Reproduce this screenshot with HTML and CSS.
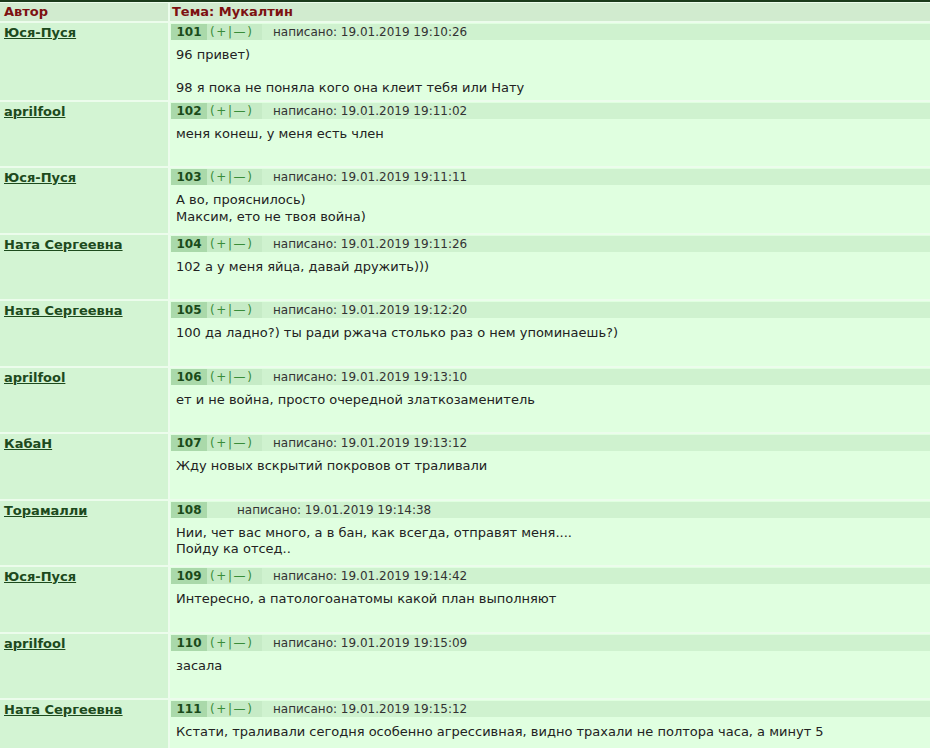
FILE: index.html
```html
<!DOCTYPE html>
<html lang="ru">
<head>
  <meta charset="UTF-8">
  <title>Мукалтин</title>
  <link rel="stylesheet" href="styles.css">
</head>
<body>
  <div class="topic">
    <div class="row head">
      <div class="cell">Автор</div>
      <div class="cell">Тема: Мукалтин</div>
    </div>

    <div class="row post">
      <div class="author"><a href="#">Юся-Пуся</a></div>
      <div class="msg">
        <div class="meta"><span class="num">101</span><span class="pm">(+|—)</span><span class="date">написано: 19.01.2019 19:10:26</span></div>
        <div class="text">96 привет)<br><br>98 я пока не поняла кого она клеит тебя или Нату</div>
      </div>
    </div>

    <div class="row post">
      <div class="author"><a href="#">aprilfool</a></div>
      <div class="msg">
        <div class="meta"><span class="num">102</span><span class="pm">(+|—)</span><span class="date">написано: 19.01.2019 19:11:02</span></div>
        <div class="text">меня конеш, у меня есть член</div>
      </div>
    </div>

    <div class="row post">
      <div class="author"><a href="#">Юся-Пуся</a></div>
      <div class="msg">
        <div class="meta"><span class="num">103</span><span class="pm">(+|—)</span><span class="date">написано: 19.01.2019 19:11:11</span></div>
        <div class="text">А во, прояснилось)<br>Максим, ето не твоя война)</div>
      </div>
    </div>

    <div class="row post">
      <div class="author"><a href="#">Ната Сергеевна</a></div>
      <div class="msg">
        <div class="meta"><span class="num">104</span><span class="pm">(+|—)</span><span class="date">написано: 19.01.2019 19:11:26</span></div>
        <div class="text">102 а у меня яйца, давай дружить)))</div>
      </div>
    </div>

    <div class="row post">
      <div class="author"><a href="#">Ната Сергеевна</a></div>
      <div class="msg">
        <div class="meta"><span class="num">105</span><span class="pm">(+|—)</span><span class="date">написано: 19.01.2019 19:12:20</span></div>
        <div class="text">100 да ладно?) ты ради ржача столько раз о нем упоминаешь?)</div>
      </div>
    </div>

    <div class="row post">
      <div class="author"><a href="#">aprilfool</a></div>
      <div class="msg">
        <div class="meta"><span class="num">106</span><span class="pm">(+|—)</span><span class="date">написано: 19.01.2019 19:13:10</span></div>
        <div class="text">ет и не война, просто очередной златкозаменитель</div>
      </div>
    </div>

    <div class="row post">
      <div class="author"><a href="#">КабаН</a></div>
      <div class="msg">
        <div class="meta"><span class="num">107</span><span class="pm">(+|—)</span><span class="date">написано: 19.01.2019 19:13:12</span></div>
        <div class="text">Жду новых вскрытий покровов от траливали</div>
      </div>
    </div>

    <div class="row post">
      <div class="author"><a href="#">Торамалли</a></div>
      <div class="msg">
        <div class="meta"><span class="num">108</span><span class="pm-empty"></span><span class="date">написано: 19.01.2019 19:14:38</span></div>
        <div class="text">Нии, чет вас много, а в бан, как всегда, отправят меня....<br>Пойду ка отсед..</div>
      </div>
    </div>

    <div class="row post">
      <div class="author"><a href="#">Юся-Пуся</a></div>
      <div class="msg">
        <div class="meta"><span class="num">109</span><span class="pm">(+|—)</span><span class="date">написано: 19.01.2019 19:14:42</span></div>
        <div class="text">Интересно, а патологоанатомы какой план выполняют</div>
      </div>
    </div>

    <div class="row post">
      <div class="author"><a href="#">aprilfool</a></div>
      <div class="msg">
        <div class="meta"><span class="num">110</span><span class="pm">(+|—)</span><span class="date">написано: 19.01.2019 19:15:09</span></div>
        <div class="text">засала</div>
      </div>
    </div>

    <div class="row post">
      <div class="author"><a href="#">Ната Сергеевна</a></div>
      <div class="msg">
        <div class="meta"><span class="num">111</span><span class="pm">(+|—)</span><span class="date">написано: 19.01.2019 19:15:12</span></div>
        <div class="text">Кстати, траливали сегодня особенно агрессивная, видно трахали не полтора часа, а минут 5</div>
      </div>
    </div>
  </div>
</body>
</html>
```

FILE: styles.css
```css
/* Forum topic page */
body {
  margin: 0;
  font-family: Verdana, "DejaVu Sans", sans-serif;
  font-size: 13px;
  color: #222;
  background-color: #ecfcec;
}

.topic {
  border-top: 2px solid #1b3b1b;
  padding-top: 1px;
  display: flex;
  flex-direction: column;
  gap: 2px;
  background-color: #ecfcec;
}

.row {
  display: grid;
  grid-template-columns: 168px 1fr;
  column-gap: 2px;
}

/* Header row */
.head .cell {
  height: 18px;
  line-height: 18px;
  padding: 0 4px;
  background-color: #d1ebcf;
  color: #7d1111;
  font-weight: bold;
}

.head .cell + .cell {
  padding-left: 2px;
}

/* Posts */
.post {
  min-height: 64.5px;
}

.author {
  background-color: #d3f4d3;
  padding: 2px 4px;
}

.author a {
  color: #1d4a1d;
  font-weight: bold;
  text-decoration: underline;
}

.msg {
  background-color: #e0ffe0;
  padding: 1px 0 0 1px;
}

.meta {
  display: flex;
  align-items: center;
  height: 16px;
  background-color: #cff2cf;
  font-size: 12px;
}

.num {
  width: 36px;
  height: 100%;
  line-height: 16px;
  text-align: center;
  background-color: #aad9aa;
  color: #1a4a1a;
  font-weight: bold;
}

.pm {
  width: 55px;
  height: 100%;
  line-height: 16px;
  padding-left: 3px;
  box-sizing: border-box;
  letter-spacing: 1.6px;
  background-color: #c6ebc6;
  color: #3a8c3a;
}

.pm-empty {
  width: 19px;
}

.date {
  padding-left: 11px;
  color: #333;
}

.text {
  padding: 7px 5px 3px;
  line-height: 16.5px;
}
```
